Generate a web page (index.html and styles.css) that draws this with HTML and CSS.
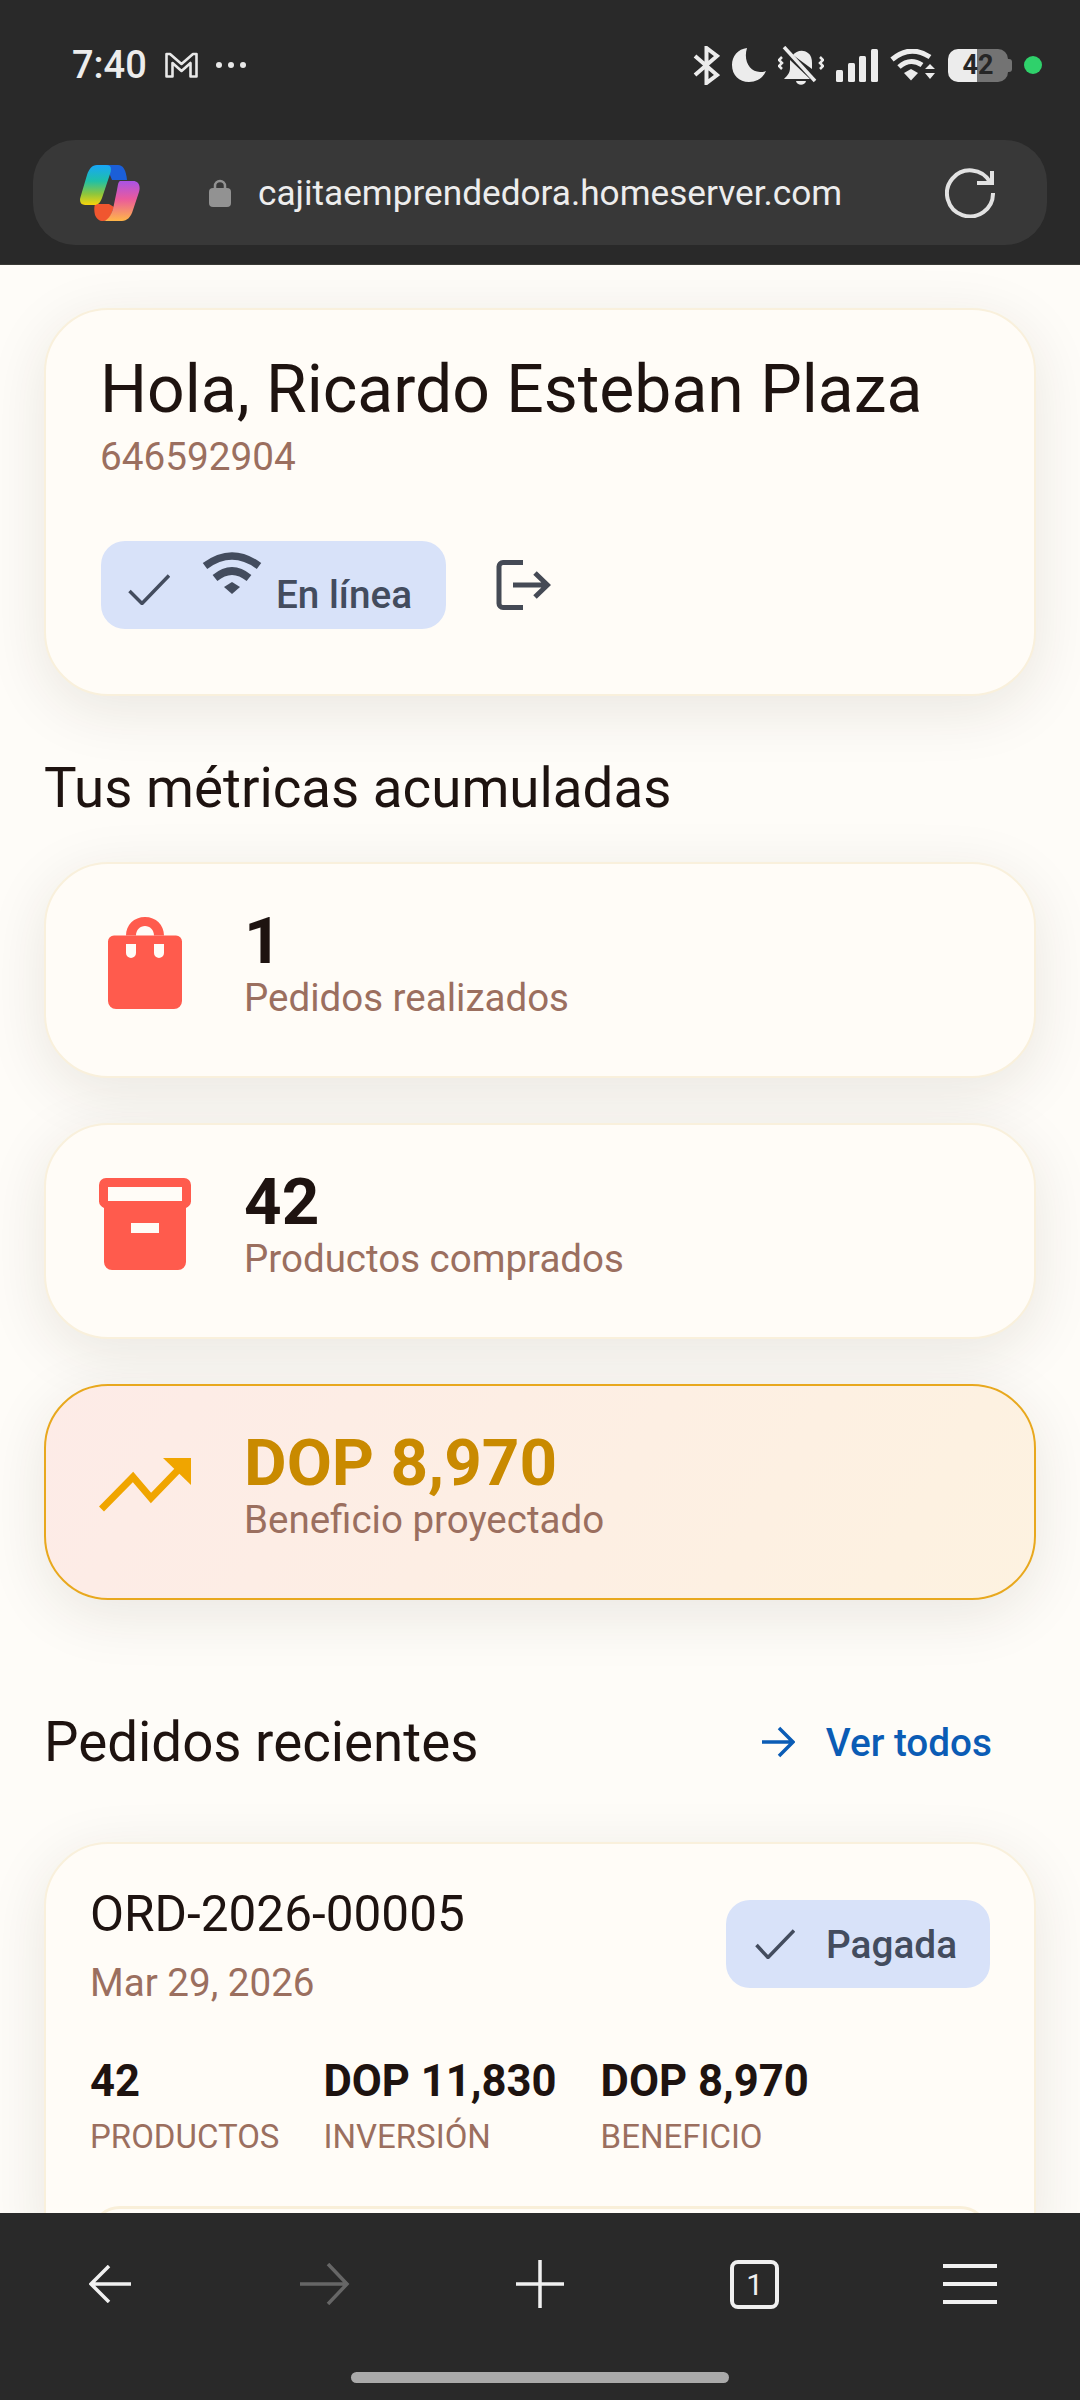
FILE: index.html
```html
<!DOCTYPE html>
<html lang="es">
<head>
    <meta charset="UTF-8">
    <meta name="viewport" content="width=device-width, initial-scale=1.0">
    <title>Cajita Emprendedora</title>
    <link rel="stylesheet" href="styles.css">
</head>
<body>
    <div class="phone">
        <!-- browser chrome top -->
        <header class="top_bar">
            <div class="status_bar">
                <div class="status_left">
                    <span class="clock">7:40</span>
                    <svg class="gmail_icon" viewBox="0 0 33 26" fill="none" stroke="#e8e8e8" stroke-width="2.6" stroke-linejoin="round"><path d="M1.5 2v22.5h6V11l9 8 9-8v13.5h6V2h-3.5l-11.5 10L5 2z"/></svg>
                    <svg class="dots_icon" viewBox="0 0 32 8" fill="#e8e8e8"><circle cx="4" cy="4" r="3"/><circle cx="16" cy="4" r="3"/><circle cx="28" cy="4" r="3"/></svg>
                </div>
                <div class="status_right">
                    <svg class="st_bt" viewBox="0 0 27 39" fill="none" stroke="#ececec" stroke-width="4"><path d="M2 10l22 19-10.500 8V2L24 10 2 29"/></svg>
                    <svg class="st_moon" viewBox="0 0 34 34" fill="#ececec"><path d="M15 0C6 1 0 8 0 17c0 10 7 17 17 17 8 0 14-4 17-11-2 1-4 1-6 1C18 24 11 13 15 0z"/></svg>
                    <svg class="st_bell" viewBox="0 0 46 39" fill="#ececec"><path d="M15 9c3-4 10-6 15-2 3 2 4 6 4 10v6z"/><path d="M12 14l20 19H6c3-3 6-6 6-11z"/><path d="M18 35h10c-1 5-9 5-10 0z"/><path d="M6 1l31 34" stroke="#ececec" stroke-width="3.500"/><path d="M4 11l-3 3 3 3-3 3 3 3M42 11l3 3-3 3 3 3-3 3" fill="none" stroke="#ececec" stroke-width="2.500"/></svg>
                    <svg class="st_signal" viewBox="0 0 42 33" fill="#ececec"><rect x="0" y="21" width="7" height="12" rx="1.500"/><rect x="12" y="14" width="7" height="19" rx="1.500"/><rect x="23" y="7" width="7" height="26" rx="1.500"/><rect x="35" y="0" width="7" height="33" rx="1.500"/></svg>
                    <svg class="st_wifi" viewBox="0 0 46 32" fill="#ececec"><path d="M2 10.500Q20-5 40 8" fill="none" stroke="#ececec" stroke-width="5"/><path d="M9 18Q20 8 32 16" fill="none" stroke="#ececec" stroke-width="5"/><path d="M14 24l7-4 7 4-7 7.500z"/><path d="M35 20l5-5 5 5zM35 24h10l-5 6z"/></svg>
                    <div class="battery">42</div>
                    <span class="cam_dot"></span>
                </div>
            </div>
            <div class="url_bar">
                <svg class="copilot_logo" viewBox="0 0 60 56">
                    <defs>
                        <linearGradient id="cp_a" x1="0" y1="0" x2="0" y2="1">
                            <stop offset="0" stop-color="#18a6f8"/>
                            <stop offset="0.4" stop-color="#1fc0a8"/>
                            <stop offset="0.72" stop-color="#8cc63e"/>
                            <stop offset="1" stop-color="#f7d40b"/>
                        </linearGradient>
                        <linearGradient id="cp_b" x1="0" y1="0" x2="0" y2="1">
                            <stop offset="0" stop-color="#a953e6"/>
                            <stop offset="0.45" stop-color="#ea5a9c"/>
                            <stop offset="1" stop-color="#ffb648"/>
                        </linearGradient>
                    </defs>
                    <path fill="#f0562f" d="M15 39H29L34 42L30 52C28 55 26 56 23 56C19 56 17 54 15 50C14 46 14 42 15 39Z"/>
                    <path fill="#1b5fd8" d="M26 0H38C43 0 46 5 47 15H32L30 10Z"/>
                    <path fill="url(#cp_a)" d="M17 0H26C31 0 32 3 30 9L22 33C20 38 18 40 14 40H5C1 40 -1 37 0.500 32L7 10C9 4 12 0 17 0Z"/>
                    <path fill="url(#cp_b)" d="M40 16H53C58 16 61 20 59 27L53 45C51 52 47 56 42 56H24C28 55 31 50 33 44L37 25C38 20 38 17 40 16Z"/>
                </svg>
                <svg class="lock_icon" viewBox="0 0 22 28" fill="#929292"><path d="M6 11V7a5 5 0 0 1 10 0v4" fill="none" stroke="#929292" stroke-width="2.500"/><rect x="0" y="9" width="22" height="19" rx="4"/></svg>
                <span class="url_text">cajitaemprendedora.homeserver.com</span>
                <svg class="reload_icon" viewBox="0 0 50 50" fill="none" stroke="#e2e2e2" stroke-width="4"><path d="M45 14A23 23 0 1 0 48 25"/><path d="M47 3V15H32"/></svg>
            </div>
        </header>

        <main class="content">
            <section class="card hello_card">
                <h1 class="hello_name">Hola, Ricardo Esteban Plaza</h1>
                <p class="hello_phone">646592904</p>
                <div class="hello_actions">
                    <div class="chip online_chip">
                        <svg class="chip_check" viewBox="0 0 42 31" fill="none" stroke="#434c5e" stroke-width="3.500"><path d="M1.500 17L14 29.500L41 1.500"/></svg>
                        <svg class="chip_wifi" viewBox="0 0 60 43" fill="#434c5e"><path d="M3 15Q30-5 57 15" fill="none" stroke="#434c5e" stroke-width="7.500"/><path d="M13 27Q30 13 47 27" fill="none" stroke="#434c5e" stroke-width="7.500"/><path d="M22 36l8-5 8 5-8 7z"/></svg>
                        <span class="online_text">En línea</span>
                    </div>
                    <svg class="logout_icon" viewBox="0 0 55 50" fill="none" stroke="#454a55" stroke-width="5"><path d="M27 2.500H7a4 4 0 0 0-4 4V43.500a4 4 0 0 0 4 4H27"/><path d="M17 25H50M39 13L51.500 25L39 37"/></svg>
                </div>
            </section>

            <h2 class="section_title metrics_title">Tus métricas acumuladas</h2>

            <div class="metric_list">
                <section class="card metric_card">
                    <div class="metric_icon">
                        <svg class="bag_icon" viewBox="0 0 74 92" fill="#ff5b4d"><path d="M18 18.500C18 8 26 0 37 0C48 0 56 8 56 18.500H46C46 13 42 9 37 9C32 9 28 13 28 18.500Z"/><path fill-rule="evenodd" d="M6 18.500H68a6 6 0 0 1 6 6V84a8 8 0 0 1-8 8H8a8 8 0 0 1-8-8V24.500a6 6 0 0 1 6-6ZM18 27v9a5 5 0 0 0 10 0v-9ZM46 27v9a5 5 0 0 0 10 0v-9Z"/></svg>
                    </div>
                    <div>
                        <div class="metric_value">1</div>
                        <div class="metric_label">Pedidos realizados</div>
                    </div>
                </section>
                <section class="card metric_card">
                    <div class="metric_icon">
                        <svg class="box_icon" viewBox="0 0 92 92" fill="#ff5b4d"><path fill-rule="evenodd" d="M7 0H85a7 7 0 0 1 7 7V22a8 8 0 0 1-5 8V84a8 8 0 0 1-8 8H13a8 8 0 0 1-8-8V30a8 8 0 0 1-5-8V7a7 7 0 0 1 7-7ZM9 9V23H83V9ZM32 45V55H60V45Z"/></svg>
                    </div>
                    <div>
                        <div class="metric_value">42</div>
                        <div class="metric_label">Productos comprados</div>
                    </div>
                </section>
                <section class="card metric_card profit_card">
                    <div class="metric_icon">
                        <svg class="trend_icon" viewBox="0 0 92 55" fill="#f0a500"><path d="M2.500 51L34 19L52 40L80 11" fill="none" stroke="#f0a500" stroke-width="7"/><path d="M64 0H92V27Z"/></svg>
                    </div>
                    <div>
                        <div class="metric_value profit_value">DOP 8,970</div>
                        <div class="metric_label">Beneficio proyectado</div>
                    </div>
                </section>
            </div>

            <div class="recent_head">
                <h2 class="section_title">Pedidos recientes</h2>
                <a href="#" class="see_all">
                    <svg class="see_all_arrow" viewBox="0 0 33 32" fill="none" stroke="#0b5cb5" stroke-width="3.500"><path d="M0 16H31M17 2L31 16L17 30"/></svg>
                    Ver todos
                </a>
            </div>

            <section class="card order_card">
                <div class="order_head">
                    <div>
                        <div class="order_code">ORD-2026-00005</div>
                        <div class="order_date">Mar 29, 2026</div>
                    </div>
                    <div class="chip paid_chip">
                        <svg class="paid_check" viewBox="0 0 40 30" fill="none" stroke="#434c5e" stroke-width="3.500"><path d="M1.500 16L13 28.500L39 1.500"/></svg>
                        <span>Pagada</span>
                    </div>
                </div>
                <div class="order_stats">
                    <div>
                        <div class="stat_value">42</div>
                        <div class="stat_label">Productos</div>
                    </div>
                    <div>
                        <div class="stat_value">DOP 11,830</div>
                        <div class="stat_label">Inversión</div>
                    </div>
                    <div>
                        <div class="stat_value">DOP 8,970</div>
                        <div class="stat_label">Beneficio</div>
                    </div>
                </div>
                <div class="order_item"></div>
            </section>
        </main>

        <!-- browser chrome bottom -->
        <footer class="bottom_bar">
            <nav class="nav_row">
                <div class="nav_cell"><svg class="nav_back" viewBox="0 0 42 38" fill="none" stroke="#f0f0f0" stroke-width="3.500"><path d="M42 19H2M20 1L2 19L20 37"/></svg></div>
                <div class="nav_cell"><svg class="nav_forward" viewBox="0 0 50 42" fill="none" stroke="#666" stroke-width="3.500"><path d="M0 21H47M28 1L47 21L28 41"/></svg></div>
                <div class="nav_cell"><svg class="nav_plus" viewBox="0 0 48 48" fill="none" stroke="#f0f0f0" stroke-width="3.500"><path d="M0 24H48M24 0V48"/></svg></div>
                <div class="nav_cell"><div class="nav_tabs">1</div></div>
                <div class="nav_cell"><svg class="nav_menu" viewBox="0 0 54 40" fill="none" stroke="#f0f0f0" stroke-width="4"><path d="M0 2H54M0 20H54M0 38H54"/></svg></div>
            </nav>
            <div class="home_line"></div>
        </footer>
    </div>
</body>
</html>
```

FILE: styles.css
```css
*{box-sizing:border-box; margin:0; padding:0;}
body{font-family:Roboto, "Noto Sans", sans-serif; background:#fefcf8; color:#1e1310;}
svg{display:block; flex:none;}
.phone{width:1080px; height:2400px; display:flex; flex-direction:column; overflow:hidden;}

/* top chrome */
.top_bar{height:265px; flex:none; background:#292929; padding:0 33px; display:flex; flex-direction:column; border-bottom:1px solid #3a3a36;}
.status_bar{height:140px; display:flex; justify-content:space-between; align-items:center; padding:0 5px 10px 39px;}
.status_left{display:flex; align-items:center;}
.clock{font-size:38px; font-weight:500; color:#ececec; width:93px;}
.gmail_icon{width:33px; height:26px;}
.dots_icon{width:32px; height:8px; margin-left:17px;}
.status_right{display:flex; align-items:center; gap:12px;}
.st_bt{width:27px; height:39px;}
.st_moon{width:34px; height:34px;}
.st_bell{width:46px; height:39px;}
.st_signal{width:42px; height:33px;}
.st_wifi{width:46px; height:32px;}
.battery{width:60px; height:33px; margin-right:4px; border-radius:10px; background:linear-gradient(90deg,#ececec 48%,#737373 48%); color:#262626; font-size:27px; font-weight:700; line-height:33px; text-align:center; position:relative;}
.battery:after{content:''; position:absolute; left:100%; top:10px; width:4px; height:13px; background:#737373; border-radius:0 3px 3px 0;}
.cam_dot{width:18px; height:18px; border-radius:50%; background:#2fd16b;}

.url_bar{height:105px; background:#383838; border-radius:42px; display:flex; align-items:center; padding:0 52px 0 47px;}
.copilot_logo{width:60px; height:56px;}
.lock_icon{width:22px; height:28px; margin-left:69px;}
.url_text{font-size:35.200px; color:#ededed; margin-left:27px; flex:1;}
.reload_icon{width:50px; height:50px;}

/* page */
.content{flex:1; min-height:0; overflow:hidden; padding:43px 44px 0;}
.card{background:#fffcf7; border:2px solid #f9f0dc; border-radius:64px; box-shadow:0 14px 60px rgba(45,35,15,0.1);}

.hello_card{height:388px; padding:42px 0 0 54px;}
.hello_name{font-size:66px; font-weight:400; line-height:76px;}
.hello_phone{font-size:38.700px; line-height:44px; margin-top:7px; color:#9b6f5f;}
.hello_actions{display:flex; align-items:center; margin:62px 0 0 1px;}
.chip{background:#d8e2f9; border-radius:24px; color:#434c5e; font-weight:500; display:flex; align-items:center;}
.online_chip{width:345px; height:88px; padding-left:27px;}
.chip_check{width:42px; height:31px; margin-top:8px;}
.chip_wifi{width:60px; height:43px; margin:-26px 0 0 32px;}
.online_text{font-size:38.700px; margin:19px 0 0 14px;}
.logout_icon{width:55px; height:50px; margin-left:50px;}

.section_title{font-size:54.700px; font-weight:400; line-height:64px;}
.metrics_title{margin:60px 0 42px;}

.metric_list{display:flex; flex-direction:column; gap:45px;}
.metric_card{height:216px; padding:0 0 14px 53px; display:flex; align-items:center; gap:53px;}
.metric_icon{width:92px; display:flex; justify-content:center;}
.bag_icon{width:74px; height:92px;}
.box_icon{width:92px; height:92px;}
.trend_icon{width:92px; height:55px;}
.metric_value{font-size:65.600px; font-weight:700; line-height:70px;}
.metric_label{font-size:38.500px; line-height:44px; color:#9b6f5f;}
.profit_card{border-color:#e8a81e; background:linear-gradient(120deg,#fdebe7,#fdf2e0);}
.profit_value{color:#c98a00;}

.recent_head{display:flex; justify-content:space-between; align-items:center; margin:110px 0 68px; padding-right:44px;}
.see_all{display:flex; align-items:center; gap:31px; font-size:38.700px; font-weight:500; color:#0b5cb5; text-decoration:none;}
.see_all_arrow{width:33px; height:32px;}

.order_card{padding:43px 44px 0 44px; border-radius:64px 64px 0 0; height:400px;}
.order_head{display:flex; justify-content:space-between; align-items:flex-start;}
.order_code{font-size:49.500px; line-height:54px;}
.order_date{font-size:38.600px; line-height:44px; margin-top:20px; color:#9b6f5f;}
.paid_chip{width:264px; height:88px; margin-top:13px; padding-left:29px; gap:31px; font-size:38.800px;}
.paid_check{width:40px; height:30px;}
.order_stats{display:flex; gap:44px; margin-top:51px;}
.stat_value{font-size:43.600px; font-weight:700; line-height:52px;}
.stat_label{font-size:33px; line-height:40px; margin-top:9px; color:#9b6f5f; text-transform:uppercase;}
.order_item{height:60px; margin-top:49px; border:3px solid #f9efd9; border-radius:32px;}

/* bottom chrome */
.bottom_bar{height:187px; flex:none; background:#292929; position:relative;}
.nav_row{height:142px; display:flex; padding:0 3px;}
.nav_cell{flex:1; display:flex; align-items:center; justify-content:center;}
.nav_back{width:42px; height:38px;}
.nav_forward{width:50px; height:42px;}
.nav_plus{width:48px; height:48px;}
.nav_tabs{width:49px; height:49px; border:4px solid #f0f0f0; border-radius:8px; color:#f0f0f0; font-size:30px; line-height:41px; text-align:center;}
.nav_menu{width:54px; height:40px;}
.home_line{width:378px; height:11px; margin:17px auto 0; background:#aaa; border-radius:6px;}
```
